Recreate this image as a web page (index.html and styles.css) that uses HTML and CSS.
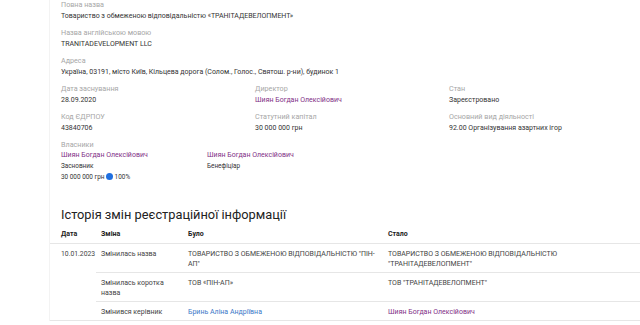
FILE: index.html
```html
<!DOCTYPE html>
<html lang="uk">
  <head>
    <meta charset="UTF-8" />
    <meta name="viewport" content="width=device-width, initial-scale=1.0" />
    <title>ТРАНІТАДЕВЕЛОПМЕНТ</title>
    <link rel="stylesheet" href="styles.css">
  </head>
  <body>
    <div class="page">
      <div class="info"><!-- Company details -->
        <div class="field">
          <div class="label">Повна назва</div>
          <div class="value">Товариство з обмеженою відповідальністю «ТРАНІТАДЕВЕЛОПМЕНТ»</div>
        </div>
        <div class="field">
          <div class="label">Назва англійською мовою</div>
          <div class="value">TRANITADEVELOPMENT LLC</div>
        </div>
        <div class="field">
          <div class="label">Адреса</div>
          <div class="value">Україна, 03191, місто Київ, Кільцева дорога (Солом., Голос., Святош. р-ни), будинок 1</div>
        </div>
        <div class="cols">
          <div class="field">
            <div class="label">Дата заснування</div>
            <div class="value">28.09.2020</div>
          </div>
          <div class="field">
            <div class="label">Директор</div>
            <div class="value"><a class="person" href="#">Шиян Богдан Олексійович</a></div>
          </div>
          <div class="field">
            <div class="label">Стан</div>
            <div class="value">Зареєстровано</div>
          </div>
        </div>
        <div class="cols">
          <div class="field">
            <div class="label">Код ЄДРПОУ</div>
            <div class="value">43840706</div>
          </div>
          <div class="field">
            <div class="label">Статутний капітал</div>
            <div class="value">30 000 000 грн</div>
          </div>
          <div class="field">
            <div class="label">Основний вид діяльності</div>
            <div class="value">92.00 Організування азартних ігор</div>
          </div>
        </div>
        <div class="label">Власники</div><!-- Owners -->
        <div class="owners">
          <div class="owner">
            <a class="person" href="#">Шиян Богдан Олексійович</a>
            <div class="role">Засновник</div>
            <div class="share">30 000 000 грн <span class="dot"></span> 100%</div>
          </div>
          <div class="owner">
            <a class="person" href="#">Шиян Богдан Олексійович</a>
            <div class="role">Бенефіціар</div>
          </div>
        </div>
      </div>

      <h2>Історія змін реєстраційної інформації</h2>
      <table class="history"><!-- Change history -->
        <tr>
          <th class="date">Дата</th>
          <th class="change">Зміна</th>
          <th class="was">Було</th>
          <th>Стало</th>
        </tr>
        <tr>
          <td class="date" rowspan="3">10.01.2023</td>
          <td>Змінилась назва</td>
          <td>ТОВАРИСТВО З ОБМЕЖЕНОЮ ВІДПОВІДАЛЬНІСТЮ "ПІН-АП"</td>
          <td>ТОВАРИСТВО З ОБМЕЖЕНОЮ ВІДПОВІДАЛЬНІСТЮ "ТРАНІТАДЕВЕЛОПМЕНТ"</td>
        </tr>
        <tr>
          <td>Змінилась коротка назва</td>
          <td>ТОВ «ПІН-АП»</td>
          <td>ТОВ "ТРАНІТАДЕВЕЛОПМЕНТ"</td>
        </tr>
        <tr>
          <td>Змінився керівник</td>
          <td><a class="old" href="#">Бринь Аліна Андріївна</a></td>
          <td><a class="person" href="#">Шиян Богдан Олексійович</a></td>
        </tr>
      </table>
    </div>
  </body>
</html>
```

FILE: styles.css
```css
* {
  margin: 0;
  padding: 0;
  box-sizing: border-box;
}
body {
  font-family: Roboto, "Liberation Sans", sans-serif;
  color: #333;
  background: #fff;
  overflow: hidden;
}
a {
  text-decoration: none;
}
.page {  /* white card starting at 50px */
  margin-left: 49px;
  width: 591px;
  border-left: 1px solid #f3f3f3;
}
.info {
  padding: 0 11px;
}
.field {
  margin-bottom: 6px;
}
.label {
  font-size: 7.2px;
  line-height: 10px;
  color: #a6a6a6;
}
.value {
  font-size: 7px;
  line-height: 12px;
}
.cols {
  display: grid;
  grid-template-columns: 194px 194px 1fr;
}
.person {
  color: #7f2f86;
}
.owners {
  display: grid;
  grid-template-columns: 146px 1fr;
}
.owner .person {
  display: block;
  font-size: 7px;
  line-height: 11px;
}
.role, .share {
  font-size: 6.4px;
  line-height: 10.5px;
}
.dot {
  display: inline-block;
  width: 7px;
  height: 7px;
  border-radius: 50%;
  background: #1f6fe0;
  vertical-align: -1.5px;
}
h2 {
  font-size: 12.8px;
  font-weight: 400;
  color: #222;
  line-height: 18px;
  margin: 24px 0 2px 11px;
}
.history {
  width: 100%;
  table-layout: fixed;
  border-collapse: collapse;
  font-size: 7px;
  line-height: 10px;
  color: #444;
}
.history th {
  text-align: left;
  font-weight: 700;
  font-size: 7px;
  color: #222;
  padding: 3px 2px 4px 5px;
}
.history td {
  vertical-align: top;
  padding: 5px 0 3px 5px;
  border-top: 1px solid #e6e6e6;
  border-bottom: 1px solid #e6e6e6;
}
.history .date {
  padding-left: 11px;
  padding-right: 0;
  width: 46px;
}
.history td.date {
  font-size: 6.8px;
}
.history .change {
  width: 87px;
}
.history .was {
  width: 200px;
}
.old {
  color: #3b78c8;
}
```
